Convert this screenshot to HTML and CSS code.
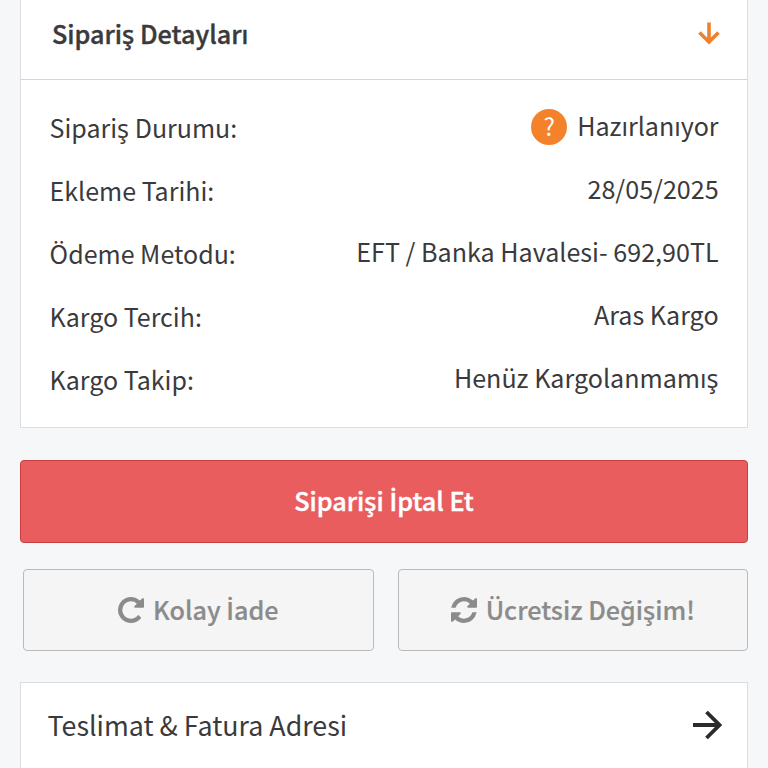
FILE: index.html
```html
<!DOCTYPE html>
<html lang="tr">
<head>
<meta charset="utf-8">
<title>Sipariş Detayları</title>
<link rel="stylesheet" href="styles.css">
</head>
<body>
<main class="page">
  <section class="card details">
    <header class="details-head">
      <h2 class="title">Sipariş Detayları</h2>
      <svg class="arrow-down" viewBox="0 0 22 23" width="22" height="23"><path d="M11 0.5V20M1.5 10.5L11 20L20.5 10.5"/></svg>
    </header>
    <dl class="rows">
      <div class="row"><dt>Sipariş Durumu:</dt><dd><span class="help">?</span><span>Hazırlanıyor</span></dd></div>
      <div class="row"><dt>Ekleme Tarihi:</dt><dd>28/05/2025</dd></div>
      <div class="row"><dt>Ödeme Metodu:</dt><dd>EFT / Banka Havalesi- 692,90TL</dd></div>
      <div class="row"><dt>Kargo Tercih:</dt><dd>Aras Kargo</dd></div>
      <div class="row"><dt>Kargo Takip:</dt><dd>Henüz Kargolanmamış</dd></div>
    </dl>
  </section>
  <button class="btn cancel"><span>Siparişi <span class="dotted">İ</span>ptal Et</span></button>
  <div class="actions">
    <button class="btn muted"><svg class="icon" viewBox="0 0 1536 1536" width="26" height="26"><path d="M1536 128v448q0 26-19 45t-45 19h-448q-42 0-59-40-17-39 14-69l138-138q-148-137-349-137-104 0-198.500 40.500t-163.500 109.500-109.500 163.500-40.500 198.500 40.500 198.500 109.500 163.500 163.500 109.500 198.500 40.500q119 0 225-52t179-147q7-10 23-12 15 0 25 9l137 138q9 8 9.500 20.500t-7.500 22.500q-109 132-264 204.500t-327 72.500q-156 0-298-61t-245-164-164-245-61-298 61-298 164-245 245-164 298-61q147 0 284.500 55.500t244.500 156.500l130-129q29-31 70-14 39 17 39 59z"/></svg><span>Kolay <span class="dotted">İ</span>ade</span></button>
    <button class="btn muted"><svg class="icon" viewBox="0 0 1536 1536" width="26" height="26"><path d="M1511 928q0 5-1 7-64 268-268 434.500t-478 166.500q-146 0-282.500-55t-243.500-157l-129 129q-19 19-45 19t-45-19-19-45v-448q0-26 19-45t45-19h448q26 0 45 19t19 45-19 45l-137 137q71 66 161 102t187 36q134 0 250-65t186-179q11-17 53-117 8-23 30-23h192q13 0 22.500 9.500t9.500 22.500zM1536 128v448q0 26-19 45t-45 19h-448q-26 0-45-19t-19-45 19-45l138-138q-148-137-349-137-134 0-250 65t-186 179q-11 17-53 117-8 23-30 23h-199q-13 0-22.500-9.500t-9.500-22.500v-7q65-268 270-434.500t480-166.500q146 0 284 55.500t245 156.500l130-129q19-19 45-19t45 19 19 45z"/></svg><span>Ücretsiz Değişim!</span></button>
  </div>
  <section class="card address">
    <span class="address-label">Teslimat &amp; Fatura Adresi</span>
    <svg class="arrow-right" viewBox="0 0 30 30" width="30" height="30"><path d="M1 15H26.500M14.500 2L27.500 15L14.500 28"/></svg>
  </section>
</main>
</body>
</html>
```

FILE: styles.css
```css
* { box-sizing: border-box; }
html, body { margin: 0; height: 100%; overflow: hidden; }
body {
  background: #f6f7f9;
  color: #3a3a3c;
  font: 400 25.1px/36px "Noto Sans CJK SC", "Noto Sans", sans-serif;
}
.page { padding: 0 20px; }
.card { background: #fff; border: 1px solid #dbdde0; }
.details { height: 428px; border-top: 0; }
.details-head {
  height: 80px;
  padding: 0 28px 12px 31px;
  border-bottom: 1px solid #d6d6d8;
  display: flex;
  align-items: center;
  justify-content: space-between;
}
.title { margin: 0; padding-bottom: 2px; font-size: 25.2px; font-weight: 500; -webkit-text-stroke: 0.4px; }
.arrow-down, .arrow-right { fill: none; stroke-width: 3.6; }
.arrow-down { stroke: #ef812c; margin-right: -0.5px; }
.rows { margin: 0; padding: 15px 28.4px 0 28.6px; }
.row { height: 62.8px; display: flex; align-items: center; justify-content: space-between; white-space: nowrap; }
dt { padding-top: 2px; font-size: 25px; }
dd { margin: 0; display: flex; align-items: center; gap: 10px; padding-bottom: 2px; }
.help {
  width: 36px;
  height: 36px;
  margin-top: 4px;
  border-radius: 50%;
  background: #f4822b;
  color: #fff;
  font-size: 24px;
  line-height: 34px;
  text-align: center;
}
.btn {
  display: flex;
  align-items: center;
  justify-content: center;
  gap: 9px;
  width: 100%;
  height: 83px;
  padding: 0;
  border-radius: 4px;
  font: 500 25.2px/36px "Noto Sans CJK SC", "Noto Sans", sans-serif;
  white-space: nowrap;
}
.btn > span { padding-bottom: 4px; }
.dotted { font-family: "Open Sans", sans-serif; font-weight: 600; line-height: 1; }
.cancel { margin-top: 32px; background: #e95d5e; border: 1px solid #c63f43; color: #fff; }
.cancel > span { -webkit-text-stroke: 0.4px; }
.actions { margin: 26px 0 0 3px; display: grid; grid-template-columns: 1fr 1fr; gap: 24px; }
.muted { height: 82px; background: #f5f5f5; border: 1px solid #b9babc; color: #8b8b8b; -webkit-text-stroke: 0.2px; }
.muted > span { padding-bottom: 3px; }
.muted .icon { margin-bottom: 1px; }
.icon { fill: currentColor; }
.address {
  margin-top: 31px;
  height: 110px;
  padding: 0 25px 24px 26.5px;
  display: flex;
  align-items: center;
  justify-content: space-between;
}
.address-label { font-size: 26.8px; padding-bottom: 1px; }
.arrow-right { stroke: #2b2b2d; stroke-width: 3.8; }
```
